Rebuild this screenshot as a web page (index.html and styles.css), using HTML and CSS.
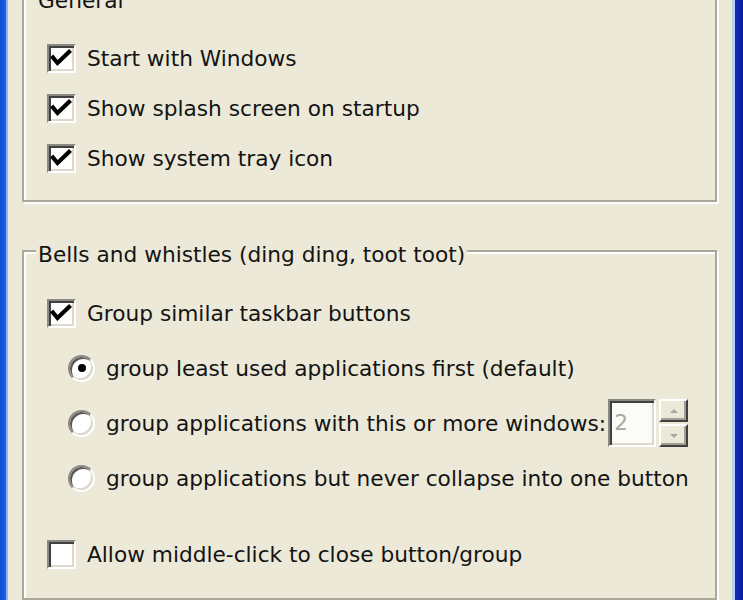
FILE: index.html
```html
<!DOCTYPE html>
<html>
<head>
<meta charset="utf-8">
<link rel="stylesheet" href="styles.css">
</head>
<body>
<div class="window">
  <div class="frame-left"></div>
  <div class="client">
    <fieldset class="group group-general">
      <legend>General</legend>
      <div class="rows">
        <div class="row"><span class="check checked"><svg viewBox="0 0 29 29"><polyline points="6,13.5 10.5,19 22,8" /></svg></span><span class="label">Start with Windows</span></div>
        <div class="row"><span class="check checked"><svg viewBox="0 0 29 29"><polyline points="6,13.5 10.5,19 22,8" /></svg></span><span class="label">Show splash screen on startup</span></div>
        <div class="row"><span class="check checked"><svg viewBox="0 0 29 29"><polyline points="6,13.5 10.5,19 22,8" /></svg></span><span class="label">Show system tray icon</span></div>
      </div>
    </fieldset>
    <fieldset class="group group-bells">
      <legend>Bells and whistles (ding ding, toot toot)</legend>
      <div class="rows rows-bells">
        <div class="row"><span class="check checked"><svg viewBox="0 0 29 29"><polyline points="6,13.5 10.5,19 22,8" /></svg></span><span class="label">Group similar taskbar buttons</span></div>
        <div class="row row-radio"><span class="radio selected"></span><span class="label">group least used applications first (default)</span></div>
        <div class="row row-radio"><span class="radio"></span><span class="label">group applications with this or more windows:</span>
          <span class="spin">
            <span class="spin-edit">2</span>
            <span class="spin-buttons">
              <span class="spin-btn"><span class="arrow-up"></span></span>
              <span class="spin-btn"><span class="arrow-down"></span></span>
            </span>
          </span>
        </div>
        <div class="row row-radio"><span class="radio"></span><span class="label">group applications but never collapse into one button</span></div>
        <div class="row row-last"><span class="check"></span><span class="label">Allow middle-click to close button/group</span></div>
      </div>
    </fieldset>
  </div>
  <div class="frame-right"></div>
</div>
</body>
</html>
```
FILE: styles.css
```css
html, body {
  margin: 0;
  padding: 0;
  height: 100%;
  overflow: hidden;
}
body {
  background: #ece9d8;
  font-family: "DejaVu Sans", Tahoma, Verdana, sans-serif;
  font-size: 21.7px;
  color: #141414;
}
.window {
  display: flex;
  height: 600px;
}
.frame-left {
  width: 6px;
  background: linear-gradient(to right, #0b4fd6, #1a62e6);
  border-right: 2px solid #8fb3ef;
  flex: none;
}
.frame-right {
  width: 8px;
  background: linear-gradient(to right, #1030b8, #0a1a98);
  border-left: 3px solid #b9cff5;
  flex: none;
}
.client {
  flex: 1;
  display: flex;
  flex-direction: column;
  overflow: hidden;
}
.group {
  margin: 0 15px 0 14px;
  padding: 0;
  border: 2px solid #aca899;
  box-shadow: inset 2px 2px 0 #fff, 2px 2px 0 #fff;
  min-width: 0;
}
.group legend {
  margin-left: 12px;
  padding: 8px 2px 0 2px;
  line-height: 26px;
  background: #ece9d8;
}
.group-general {
  margin-top: -20px;
}
.group-bells {
  margin-top: 32px;
  flex: 1;
}
.rows {
  display: flex;
  flex-direction: column;
  gap: 20px;
  padding: 29px 0 27px 23px;
}
.rows-bells {
  gap: 25px;
  padding-top: 30px;
}
.row {
  display: flex;
  align-items: center;
  height: 30px;
  gap: 11px;
  white-space: nowrap;
}
.row-radio {
  padding-left: 21px;
}
.row-last {
  margin-top: 21px;
}
.check {
  flex: none;
  width: 25px;
  height: 25px;
  background: #fff;
  border: 2px solid;
  border-color: #8a8a82 #fff #fff #8a8a82;
  box-shadow: inset 2px 2px 0 #404040, inset -2px -2px 0 #dcd8cc;
  display: block;
}
.check svg {
  display: block;
  margin: -2px 0 0 -2px;
  width: 29px;
  height: 29px;
}
.check polyline {
  fill: none;
  stroke: #000;
  stroke-width: 4.2;
  stroke-linecap: square;
  stroke-linejoin: miter;
}
.radio {
  flex: none;
  width: 27px;
  height: 27px;
  border-radius: 50%;
  box-sizing: border-box;
  background: #fff;
  border: 2px solid;
  border-color: #8a8a82 #fff #fff #8a8a82;
  box-shadow: inset 2px 2px 0 #5a5a56, inset -2px -2px 0 #dcd8cc;
  display: flex;
  align-items: center;
  justify-content: center;
}
.radio.selected::after {
  content: "";
  width: 8px;
  height: 8px;
  border-radius: 50%;
  background: #000;
}
.spin {
  display: flex;
  align-items: stretch;
  height: 48px;
  margin-left: -9px;
  gap: 3px;
}
.spin-edit {
  width: 40px;
  background: #fbfbf8;
  border: 2px solid;
  border-color: #8a8a82 #fff #fff #8a8a82;
  box-shadow: inset 2px 2px 0 #404040, inset -2px -2px 0 #dcd8cc;
  color: #a8a8a0;
  padding-left: 4px;
  line-height: 44px;
}
.spin-buttons {
  display: flex;
  flex-direction: column;
  width: 29px;
  gap: 2px;
}
.spin-btn {
  flex: 1;
  background: #ece9d8;
  border: 2px solid;
  border-color: #fff #404040 #404040 #fff;
  box-shadow: inset -2px -2px 0 #a0a094;
  display: flex;
  align-items: center;
  justify-content: center;
}
.arrow-up {
  width: 0;
  height: 0;
  border-left: 4px solid transparent;
  border-right: 4px solid transparent;
  border-bottom: 4px solid #a8a8a0;
}
.arrow-down {
  width: 0;
  height: 0;
  border-left: 4px solid transparent;
  border-right: 4px solid transparent;
  border-top: 4px solid #a8a8a0;
}
```
